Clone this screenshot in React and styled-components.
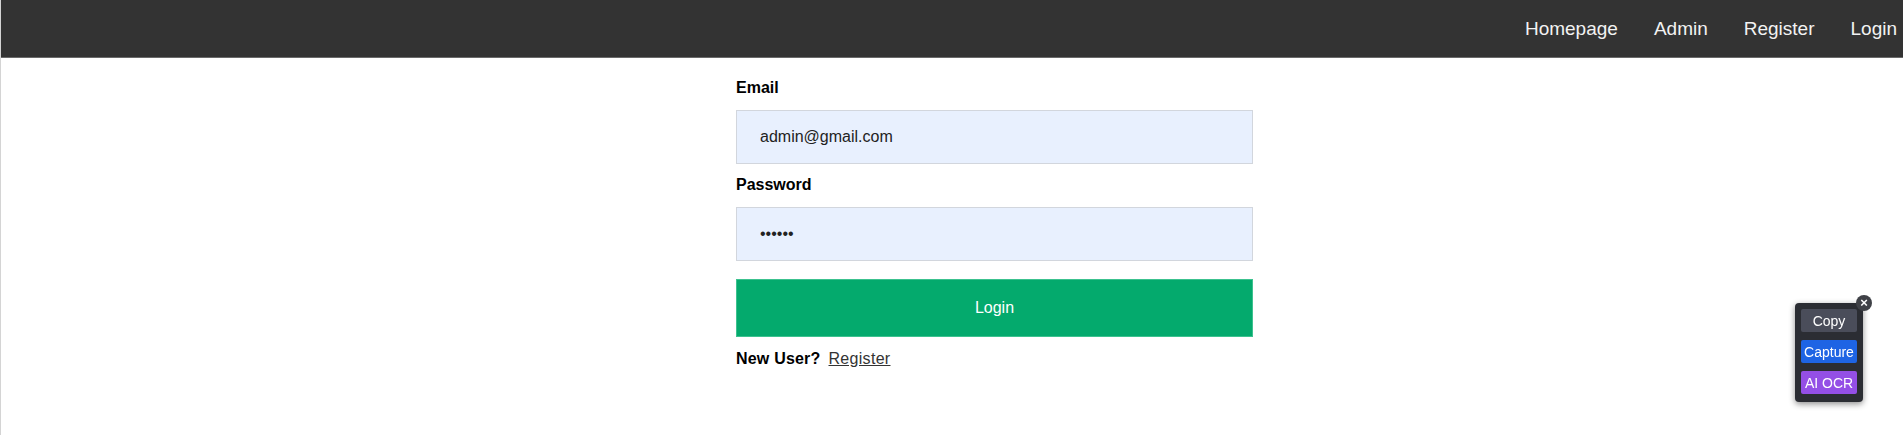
import styled, { createGlobalStyle } from "styled-components";

const GlobalStyle = createGlobalStyle`
  body {
    margin: 0;
    font-family: "Liberation Sans", Arial, sans-serif;
    background: #fff;
  }
`;

const Page = styled.div`
  min-height: 435px;
  border-left: 1px solid #d4d4d4;
  box-sizing: border-box;
`;

const Navbar = styled.nav`
  height: 57px;
  background: #333;
  border-bottom: 1px solid #6a6a6a;
  display: flex;
  justify-content: flex-end;
  align-items: center;
  gap: 36px;
  padding-right: 6px;
`;

const NavLink = styled.a`
  color: #f2f2f2;
  font-size: 19px;
  text-decoration: none;
  cursor: pointer;
`;

const Form = styled.form`
  width: 517px;
  margin-left: 735px;
  padding-top: 21px;
  display: flex;
  flex-direction: column;
`;

const Label = styled.label`
  font-size: 16px;
  font-weight: 700;
  color: #000;
  margin-bottom: 13px;
`;

const Input = styled.input`
  box-sizing: border-box;
  height: 54px;
  width: 100%;
  margin: 0 0 12px;
  padding: 0 23px;
  background: #e8f0fe;
  border: 1px solid #d2d6dd;
  font-family: "Liberation Sans", Arial, sans-serif;
  font-size: 16px;
  color: #222;
  outline: none;
`;

const SubmitButton = styled.button`
  box-sizing: border-box;
  height: 58px;
  width: 100%;
  margin-top: 6px;
  background: #04aa6d;
  border: 1px solid #3cc28f;
  color: #fff;
  font-family: "Liberation Sans", Arial, sans-serif;
  font-size: 16px;
  cursor: pointer;
`;

const Footer = styled.p`
  margin: 13px 0 0;
  font-size: 16px;
  font-weight: 700;
  letter-spacing: 0.2px;
  color: #000;

  a {
    margin-left: 8px;
    font-weight: 400;
    letter-spacing: 0.3px;
    color: #333;
    text-decoration: underline;
  }
`;

const Widget = styled.div`
  position: fixed;
  top: 303px;
  right: 40px;
  width: 68px;
  box-sizing: border-box;
  padding: 6px 6px 8px;
  background: #2b2d33;
  border-radius: 4px;
  box-shadow: 0 2px 6px rgba(0, 0, 0, 0.45);
  display: flex;
  flex-direction: column;
  gap: 8px;
`;

const WidgetButton = styled.button`
  height: 23px;
  border: none;
  border-radius: 2px;
  padding: 0;
  background: ${(p) => p.bg};
  color: #fff;
  font-family: "Liberation Sans", Arial, sans-serif;
  font-size: 14px;
  cursor: pointer;
`;

const CloseButton = styled.span`
  position: absolute;
  top: -8px;
  right: -9px;
  width: 16px;
  height: 16px;
  border-radius: 50%;
  background: #3f4147;
  color: #fff;
  font-size: 13px;
  font-weight: 700;
  line-height: 16px;
  text-align: center;
`;

export default function App() {
  return (
    <>
      <GlobalStyle />
      <Page>
        <Navbar>
          <NavLink>Homepage</NavLink>
          <NavLink>Admin</NavLink>
          <NavLink>Register</NavLink>
          <NavLink>Login</NavLink>
        </Navbar>
        <Form onSubmit={(e) => e.preventDefault()}>
          <Label>Email</Label>
          <Input type="email" defaultValue="admin@gmail.com" />
          <Label>Password</Label>
          <Input type="password" defaultValue="123456" />
          <SubmitButton type="submit">Login</SubmitButton>
          <Footer>
            New User?<a>Register</a>
          </Footer>
        </Form>
        <Widget>
          <CloseButton>×</CloseButton>
          <WidgetButton bg="#4a4d5a">Copy</WidgetButton>
          <WidgetButton bg="#1e64e4">Capture</WidgetButton>
          <WidgetButton bg="#944fe6">AI OCR</WidgetButton>
        </Widget>
      </Page>
    </>
  );
}
